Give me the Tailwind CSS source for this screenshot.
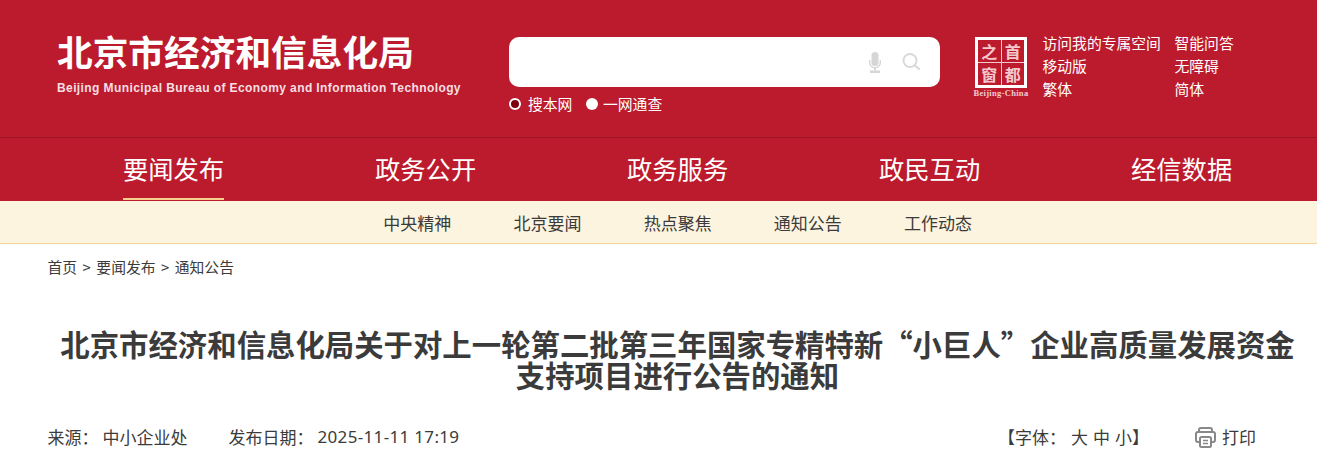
<!DOCTYPE html>
<html lang="zh-CN">
<head>
  <meta charset="UTF-8" />
  <title>北京市经济和信息化局</title>
  <script src="https://cdn.jsdelivr.net/npm/@tailwindcss/browser@4"></script>
</head>
<body class="bg-white overflow-hidden font-['Noto_Sans_CJK_SC','Liberation_Sans',sans-serif] text-[#3b3b3b]">

  <header class="h-[138px] bg-[#bc1b2d] border-b border-[#a01525] flex text-white">
    <div class="w-[509px] pl-[57px] pt-[29px] shrink-0">
      <div class="text-[35.7px] leading-[44px] font-bold whitespace-nowrap">北京市经济和信息化局</div>
      <div class="mt-[7px] text-[12px] leading-[16px] font-bold font-['Liberation_Sans'] text-[#f6dfe2] tracking-[0.4px] whitespace-nowrap">Beijing Municipal Bureau of Economy and Information Technology</div>
    </div>

    <div class="w-[431px] pt-[37px] shrink-0">
      <div class="h-[50px] bg-white rounded-[10px] flex items-center justify-end pr-[20px] gap-[21px]">
        <svg width="12" height="21" viewBox="0 0 12 21" fill="#d6d6d6">
          <rect x="2.500" y="0" width="7" height="14" rx="3.500" />
          <path d="M0.700 8v2.500a5.300 5.300 0 0 0 10.600 0V8" fill="none" stroke="#d6d6d6" stroke-width="1.400" />
          <rect x="5" y="15.500" width="2" height="3" />
          <rect x="1" y="18.500" width="10" height="2.500" />
        </svg>
        <svg class="mb-[1px]" width="18" height="17" viewBox="0 0 18 17" fill="none" stroke="#d9d9d9" stroke-width="2">
          <circle cx="8" cy="7.500" r="6.500" />
          <path d="M13 12.500l4 3.500" stroke-linecap="round" />
        </svg>
      </div>
      <div class="mt-[8px] flex items-center text-[14.8px] leading-[18px]">
        <span class="w-[12px] h-[12px] rounded-full bg-[#7a0010] border-[2.5px] border-white"></span>
        <span class="ml-[7px]">搜本网</span>
        <span class="ml-[13.6px] w-[12px] h-[12px] rounded-full bg-white"></span>
        <span class="ml-[5px]">一网通查</span>
      </div>
    </div>

    <div class="ml-[35px] pt-[37px] w-[58px] shrink-0">
      <div class="w-[52px] h-[51px] border-[3px] border-white grid grid-cols-2 grid-rows-2 gap-[1px] bg-[#f3c9ce] font-bold text-[#f3c9ce]">
        <span class="bg-[#bc1b2d] text-[16px] leading-[22px] text-center">之</span>
        <span class="bg-[#bc1b2d] text-[16px] leading-[22px] text-center">首</span>
        <span class="bg-[#bc1b2d] text-[16px] leading-[22px] text-center">窗</span>
        <span class="bg-[#bc1b2d] text-[16px] leading-[22px] text-center">都</span>
      </div>
      <div class="mt-[1px] -ml-[4px] w-[60px] text-[8.5px] leading-[9px] font-bold text-center text-[#f3ccd1] font-['Liberation_Serif'] tracking-[0.3px] whitespace-nowrap">Beijing-China</div>
    </div>

    <div class="ml-[9.5px] pt-[30.5px] grid grid-cols-[132px_auto] text-[14.8px] leading-[23px] content-start">
      <span>访问我的专属空间</span><span>智能问答</span>
      <span>移动版</span><span>无障碍</span>
      <span>繁体</span><span>简体</span>
    </div>
  </header>

  <nav class="h-[63px] bg-[#bc1b2d] flex pl-[123px] gap-[151px] text-[25.3px] leading-[60px] text-white">
    <a class="w-[101px] h-[62px] whitespace-nowrap border-b-2 border-[#f7cf8c]">要闻发布</a>
    <a class="w-[101px] whitespace-nowrap">政务公开</a>
    <a class="w-[101px] whitespace-nowrap">政务服务</a>
    <a class="w-[101px] whitespace-nowrap">政民互动</a>
    <a class="w-[101px] whitespace-nowrap">经信数据</a>
  </nav>

  <div class="h-[43px] bg-[#fdf4e0] border-b border-[#f5d59f] flex pl-[383.3px] gap-[62.2px] text-[17px] leading-[43px]">
    <a class="w-[68px] whitespace-nowrap">中央精神</a>
    <a class="w-[68px] whitespace-nowrap">北京要闻</a>
    <a class="w-[68px] whitespace-nowrap">热点聚焦</a>
    <a class="w-[68px] whitespace-nowrap">通知公告</a>
    <a class="w-[68px] whitespace-nowrap">工作动态</a>
  </div>

  <div class="pl-[47.5px] pt-[13px] text-[14.8px] leading-[20px] flex gap-[5.5px]">
    <span>首页</span><span>&gt;</span><span>要闻发布</span><span>&gt;</span><span>通知公告</span>
  </div>

  <h1 class="mt-[51px] pl-[60px] w-[1295px] text-center text-[29.4px] leading-[31px] font-bold">北京市经济和信息化局关于对上一轮第二批第三年国家专精特新“小巨人”企业高质量发展资金支持项目进行公告的通知</h1>

  <div class="mt-[35px] pl-[47.5px] flex items-center text-[17px] leading-[24px]">
    <span class="w-[55px] whitespace-nowrap">来源&#65306;</span>
    <span class="w-[126px] whitespace-nowrap">中小企业处</span>
    <span class="w-[89px] whitespace-nowrap">发布日期&#65306;</span>
    <span class="w-[680.5px] font-['Noto_Sans'] tracking-[0.33px] whitespace-nowrap">2025-11-11 17:19</span>
    <span class="w-[197px] flex whitespace-nowrap">
      <span>【字体&#65306;</span>
      <span class="ml-[5px]">大</span><span class="ml-[5px]">中</span><span class="ml-[5px]">小</span><span>】</span>
    </span>
    <svg class="mr-[6px]" width="21" height="21" viewBox="0 0 21 21" fill="none" stroke="#888" stroke-width="2">
      <path d="M4 5V3a2 2 0 0 1 2-2h9a2 2 0 0 1 2 2v2" />
      <path d="M5 15H3a2 2 0 0 1-2-2V7a2 2 0 0 1 2-2h15a2 2 0 0 1 2 2v6a2 2 0 0 1-2 2h-2" />
      <rect x="5" y="10" width="11" height="10" rx="1.500" />
      <path d="M8 13.500h5M8 16.500h5" stroke-width="1.500" />
    </svg>
    <span>打印</span>
  </div>

</body>
</html>
